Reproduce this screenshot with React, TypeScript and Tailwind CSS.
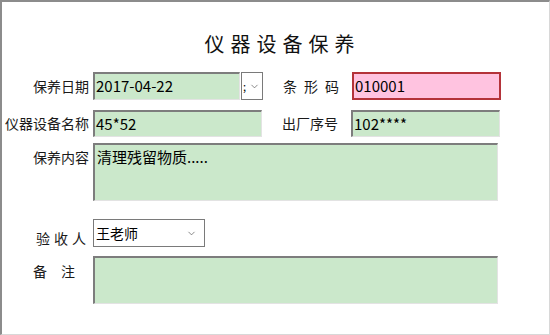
import { ChevronDown } from "lucide-react";

const font = { fontFamily: '"Microsoft YaHei", "Noto Sans CJK SC", sans-serif' };

const sunken =
  "bg-[#cbe8cb] border-t-2 border-l-2 border-[#7d7d7d] border-r border-b border-r-[#e3e3e3] border-b-[#e3e3e3]";

const Label = ({ text, className = "" }: { text: string; className?: string }) => (
  <div className={`w-[88px] shrink-0 text-right text-[14px] text-[#1a1a1a] pr-[1px] whitespace-nowrap ${className}`}>{text}</div>
);

export default function App() {
  return (
    <div
      style={font}
      className="w-[550px] h-[335px] bg-white border-t-2 border-l-2 border-[#8c8c8c] border-r border-b border-r-[#d8d8d8] border-b-[#d8d8d8] overflow-hidden"
    >
      <div className="pt-[28px] text-center text-[20px] tracking-[6px] text-[#111] pl-[14px] leading-[28px]">仪器设备保养</div>

      <div className="mt-[14px] flex items-center h-[28px]">
        <Label text="保养日期" />
        <div className={`ml-[3px] w-[147px] h-[28px] ${sunken} flex items-center pl-[1px] text-[15px] text-black`}>2017-04-22</div>
        <div className="ml-[1px] w-[22px] h-[28px] border border-[#7a7a7a] bg-white flex items-center relative">
          <span className="absolute left-[1px] top-[8px] text-[11px] leading-none text-black">;</span>
          <ChevronDown className="w-[11px] h-[11px] ml-[7px] text-[#555]" strokeWidth={1.5} />
        </div>
        <div className="ml-[20px] w-[64px] shrink-0 whitespace-nowrap text-[14px] tracking-[7px] text-[#1a1a1a]">条形码</div>
        <div className="ml-[5px] w-[149px] h-[28px] bg-[#ffc3e0] border-2 border-[#b4333a] flex items-center pl-[1px] text-[15px] text-black">010001</div>
      </div>

      <div className="mt-[10px] flex items-center h-[27px]">
        <Label text="仪器设备名称" />
        <div className={`ml-[3px] w-[169px] h-[27px] ${sunken} flex items-center pl-[1px] text-[15px] text-black`}>45*52</div>
        <div className="ml-[20px] w-[64px] shrink-0 whitespace-nowrap text-[14px] text-[#1a1a1a]">出厂序号</div>
        <div className={`ml-[5px] w-[149px] h-[27px] ${sunken} flex items-center pl-[1px] text-[15px] text-black`}>102****</div>
      </div>

      <div className="mt-[6px] flex items-start">
        <Label text="保养内容" className="mt-[4px]" />
        <div className={`ml-[3px] w-[405px] h-[58px] ${sunken} pl-[2px] pt-[2px] text-[15px] leading-[20px] text-black`}>清理残留物质.....</div>
      </div>

      <div className="mt-[18px] flex items-center h-[28px]">
        <div className="w-[88px] shrink-0 pl-[34px] pt-[10px] whitespace-nowrap text-[14px] tracking-[4px] text-[#1a1a1a]">验收人</div>
        <div className="ml-[3px] w-[112px] h-[28px] border border-[#7a7a7a] bg-white flex items-center justify-between pl-[2px] pr-[7px] text-[14px] text-black">
          <span>王老师</span>
          <ChevronDown className="w-[11px] h-[11px] text-[#555]" strokeWidth={1.5} />
        </div>
      </div>

      <div className="mt-[9px] flex items-start">
        <div className="w-[88px] shrink-0 pl-[31px] pt-[5px] whitespace-nowrap text-[14px] tracking-[14px] text-[#1a1a1a]">备注</div>
        <div className={`ml-[3px] w-[405px] h-[48px] ${sunken}`}></div>
      </div>
    </div>
  );
}
